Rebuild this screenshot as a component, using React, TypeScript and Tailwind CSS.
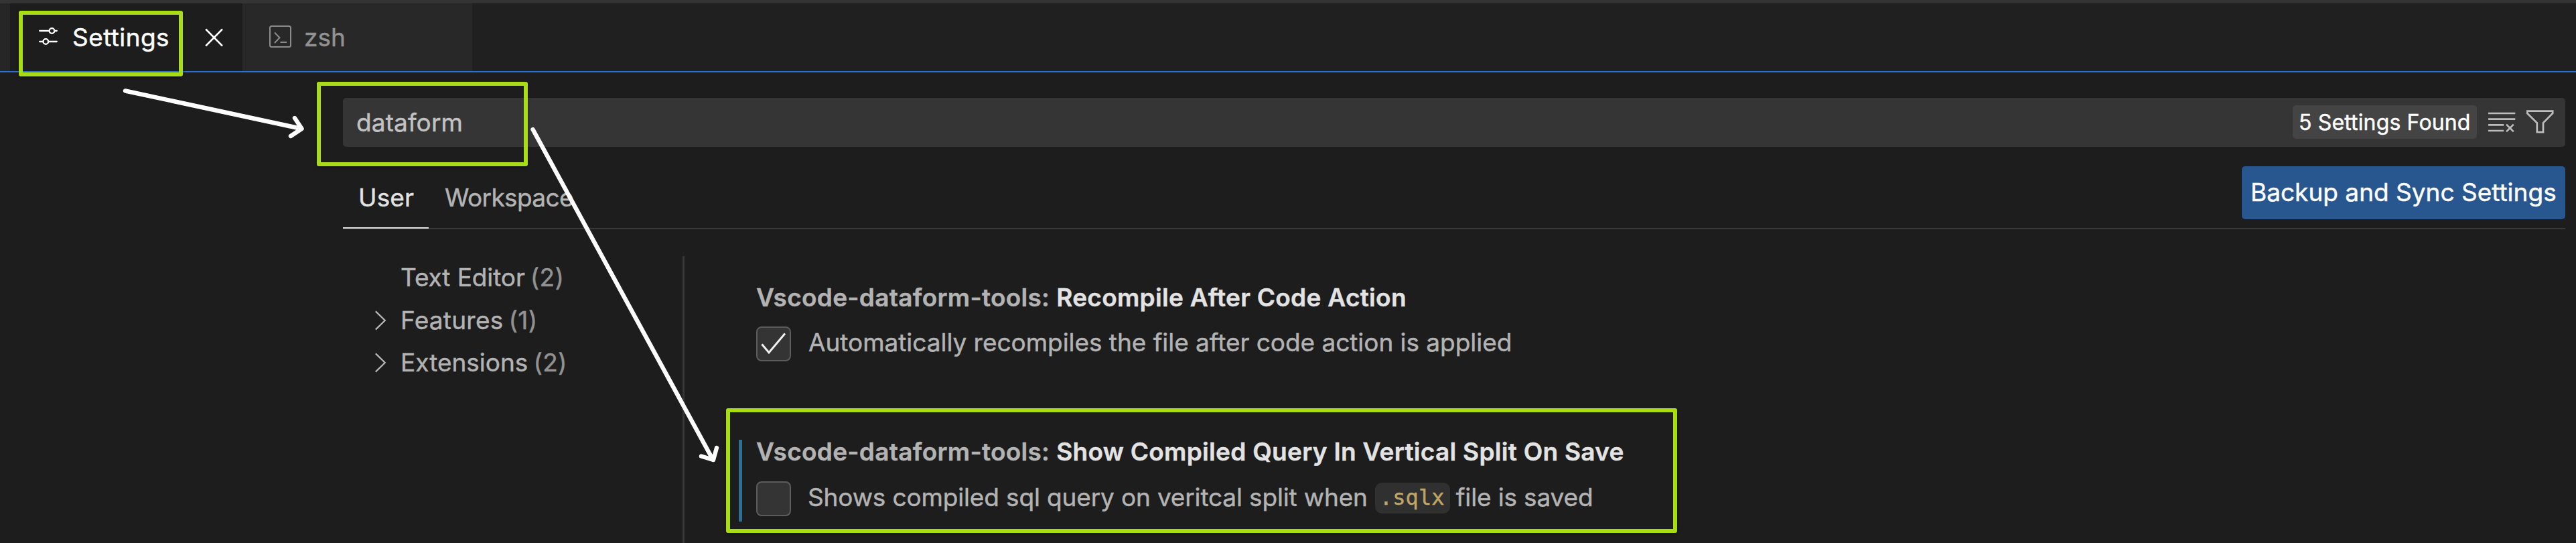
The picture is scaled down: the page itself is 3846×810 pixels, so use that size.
import type { ReactNode } from "react";

function SettingsIcon() {
  return (
    <svg className="h-[34px] w-[34px] shrink-0" viewBox="0 0 34 34" fill="none" stroke="#ffffff" strokeLinecap="round" strokeWidth="2.3">
      <path d="M4.2 9H18.6M26.4 9H29.8" />
      <circle cx="22.5" cy="9" r="3.8" />
      <path d="M4.2 25H9M17.4 25H29.8" />
      <circle cx="13.3" cy="25" r="3.8" />
    </svg>
  );
}

function TerminalIcon() {
  return (
    <svg className="h-[34px] w-[34px] shrink-0" viewBox="0 0 34 34" fill="none" stroke="#8c8c8c" strokeWidth="2">
      <rect x="2" y="2" width="31" height="31" rx="2.5" />
      <path d="M9 11.5L16.5 19.2L9 27M17.5 26H27" />
    </svg>
  );
}

function ClearFilterIcon() {
  return (
    <svg className="mt-[15px] ml-[16px] h-[38px] w-[42px] shrink-0" viewBox="0 0 42 38" fill="none" stroke="#bcbcbc" strokeWidth="2.7">
      <path d="M1 8H41.3M1 16.6H41.3M1 25.3H24M1 34H24M28 24.6L38.8 35.4M38.8 24.6L28 35.4" />
    </svg>
  );
}

function FunnelIcon() {
  return (
    <svg className="mt-[17px] ml-[16px] h-[38px] w-[42px] shrink-0" viewBox="0 0 42 38" fill="none" stroke="#bcbcbc" strokeWidth="2.7">
      <path d="M1.2 2.7H39.2V6L25 20.2V34.2H15.8V20.2L1.2 6Z" />
    </svg>
  );
}

function TreeRow({ label, count, open = true }: { label: ReactNode; count: string; open?: boolean }) {
  return (
    <div className="flex h-[63.5px] items-start">
      <span className="flex h-[45px] w-[86px] items-center pl-[46px]">
        {open && (
          <svg className="mt-[1px] h-[32px] w-[20px]" viewBox="0 0 20 32" fill="none" stroke="#b8b8b8" strokeWidth="2.2">
            <path d="M2.8 2.4L16.8 16L2.8 29.6" />
          </svg>
        )}
      </span>
      <span className="leading-[45px] text-[#b3b3b3]">{label}</span>
      <span className="ml-[8px] leading-[45px] tracking-[0.3px] text-[#929292]">{count}</span>
    </div>
  );
}

function Checkbox({ checked }: { checked?: boolean }) {
  return (
    <span className="flex h-[52px] w-[52px] shrink-0 items-center justify-center rounded-[8px] border-2 border-[#5c5c5c] bg-[#343434]">
      {checked && (
        <svg className="h-[48px] w-[48px]" viewBox="0 0 48 48" fill="none" stroke="#f0f0f0" strokeWidth="3">
          <path d="M6.5 24.5L17 37L41 8.5" />
        </svg>
      )}
    </span>
  );
}

function SettingTitle({ children }: { children: ReactNode }) {
  return (
    <h2 className="flex gap-[10px] font-semibold leading-[45px] tracking-[0.29px] text-[#b3b3b3]">
      <span>Vscode-dataform-tools:</span>
      <span className="text-[#e3e3e3]">{children}</span>
    </h2>
  );
}

function Annotations() {
  return (
    <>
      <div className="absolute top-[16px] left-[28px] h-[98px] w-[245px] rounded-[3px] border-6 border-[#a8dc15] shadow-[0_2px_4px_rgba(0,0,0,0.35)]" />
      <div className="absolute top-[122px] left-[473px] h-[126px] w-[315px] rounded-[3px] border-6 border-[#a8dc15] shadow-[0_2px_4px_rgba(0,0,0,0.35)]" />
      <div className="absolute top-[609px] left-[1084px] h-[186px] w-[1420px] rounded-[3px] border-6 border-[#a8dc15] shadow-[0_2px_4px_rgba(0,0,0,0.35)]" />
      <svg className="absolute top-0 left-0 h-[810px] w-[1100px]" viewBox="0 0 1100 810" fill="none" stroke="#ffffff" strokeWidth="6.4" strokeLinecap="round" strokeLinejoin="round">
        <path d="M187 135.500L450 192M440 176L450.500 192L434 203" />
        <path d="M795.500 193L1064.500 686M1047 680.500L1065 686L1070 668" />
      </svg>
    </>
  );
}

export default function App() {
  return (
    <div className="relative flex h-[810px] w-[3846px] flex-col overflow-hidden bg-[#1d1d1d] font-['Inter',sans-serif] text-[37px] [-webkit-text-stroke:0.45px_currentColor]">
      <div className="h-[5px] shrink-0 bg-[#343434]" />
      <div className="flex h-[103px] shrink-0 border-b-2 border-[#2f6fd0] bg-[#202020]">
        <div className="w-[15px] bg-[#262626]" />
        <div className="flex w-[347px] bg-[#1d1d1d] pt-[28px]">
          <div className="mt-[4px] ml-[40px] flex">
            <SettingsIcon />
          </div>
          <span className="ml-[19px] w-[142px] leading-[45px] tracking-[0.41px] text-white">Settings</span>
          <svg className="mt-[8px] ml-[54px] h-[30px] w-[30px]" viewBox="0 0 30 30" fill="none" stroke="#ffffff" strokeWidth="2.5">
            <path d="M3.2 2.5L28 27.5M28 2.5L3.2 27.5" />
          </svg>
        </div>
        <div className="flex w-[343px] bg-[#282828] pt-[28px]">
          <div className="mt-[4px] ml-[39px] flex">
            <TerminalIcon />
          </div>
          <span className="ml-[19px] leading-[45px] text-[#919191]">zsh</span>
        </div>
      </div>

      <main className="flex flex-1 flex-col pt-[38px] pr-[16px] pl-[512px]">
        <div className="flex h-[73px] shrink-0 rounded-[5px] bg-[#353535]">
          <span className="mt-[14px] ml-[20px] flex-1 leading-[45px] tracking-[0.1px] text-[#c2c2c2]">dataform</span>
          <span className="mt-[11px] h-[50px] w-[275px] rounded-[5px] bg-[#444444] pt-[6px] pl-[9px] text-[32px] leading-[39px] tracking-[0.15px] whitespace-nowrap text-white">
            5 Settings Found
          </span>
          <ClearFilterIcon />
          <FunnelIcon />
          <span className="w-[16px]" />
        </div>

        <nav className="flex h-[123px] shrink-0 border-b-2 border-[#3a3a3a]">
          <span className="h-[122px] w-[128px] border-b-2 border-[#e3dfe3] pt-[53px] pl-[23px] leading-[45px] tracking-[0.12px] text-[#e3e3e3]">User</span>
          <span className="pt-[53px] pl-[24px] leading-[45px] tracking-[-0.63px] text-[#b3b3b3]">Workspace</span>
          <button className="mt-[29px] ml-auto flex h-[79px] w-[483px] rounded-[5px] bg-[#28568f] pt-[16px] pl-[13px] leading-[45px] whitespace-nowrap text-white">
            Backup and Sync Settings
          </button>
        </nav>

        <div className="flex flex-1 pt-[40px]">
          <aside className="w-[510px] border-r-3 border-[#373737] pt-[9px]">
            <TreeRow label={<span className="tracking-[-0.1px]">Text Editor</span>} count="(2)" open={false} />
            <TreeRow label={<span className="tracking-[0.25px]">Features</span>} count="(1)" />
            <TreeRow label="Extensions" count="(2)" />
          </aside>

          <section className="flex-1 pt-[39px] pl-[81px]">
            <article className="pl-[26px]">
              <SettingTitle>Recompile After Code Action</SettingTitle>
              <div className="mt-[21px] flex">
                <Checkbox checked />
                <p className="ml-[26px] pt-[1px] leading-[45px] tracking-[-0.04px] text-[#b3b3b3]">
                  Automatically recompiles the file after code action is applied
                </p>
              </div>
            </article>

            <article className="mt-[117px] flex h-[122px] border-l-5 border-[#2f6f94] pl-[21px]">
              <div className="-mt-[5px]">
                <SettingTitle>Show Compiled Query In Vertical Split On Save</SettingTitle>
                <div className="mt-[22px] flex">
                  <Checkbox />
                  <p className="ml-[25px] flex pt-[1px] leading-[45px] tracking-[-0.15px] text-[#b3b3b3]">
                    <span>Shows compiled sql query on veritcal split when</span>
                    <code className="mt-[1px] ml-[11px] h-[46px] w-[112px] rounded-[10px] bg-[#303030] pl-[7px] font-['DejaVu_Sans_Mono',monospace] text-[32px] leading-[45px] tracking-[0.1px] text-[#bfa666]">
                      .sqlx
                    </code>
                    <span className="ml-[9px]">file is saved</span>
                  </p>
                </div>
              </div>
            </article>
          </section>
        </div>
      </main>
      <Annotations />
    </div>
  );
}
